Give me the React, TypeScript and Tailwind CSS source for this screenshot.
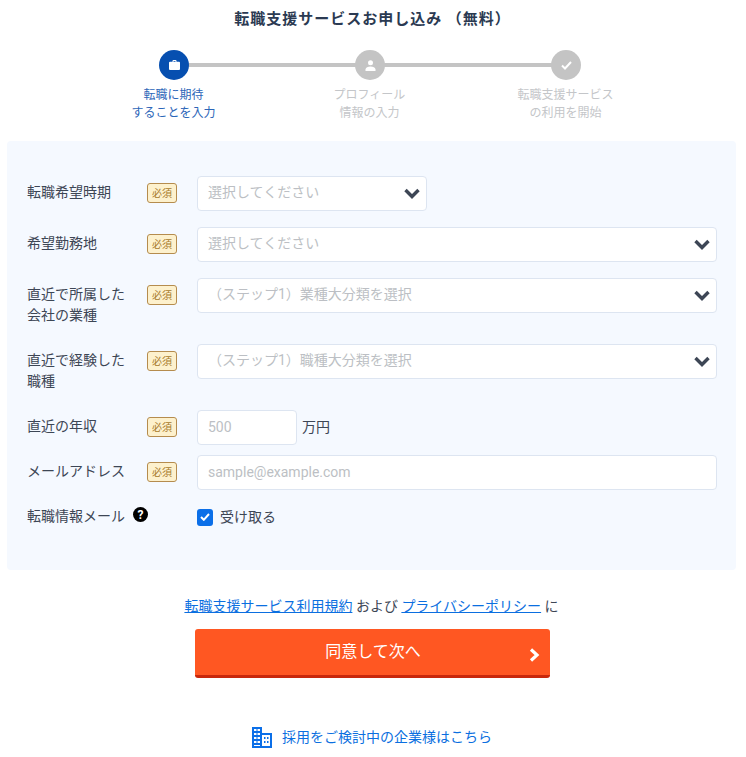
// App.tsx
import type { ReactNode } from "react";

const steps = [
  { label: ["転職に期待", "することを入力"], active: true, icon: "bag" },
  { label: ["プロフィール", "情報の入力"], active: false, icon: "user" },
  { label: ["転職支援サービス", "の利用を開始"], active: false, icon: "check" },
];

const StepIcon = ({ name }: { name: string }) => {
  if (name === "bag") {
    return (
      <svg width="11" height="10" viewBox="0 0 11 10" fill="#fff">
        <path d="M3.500 1.800V1a1 1 0 0 1 1-1h2a1 1 0 0 1 1 1v.8H10a1 1 0 0 1 1 1V9a1 1 0 0 1-1 1H1a1 1 0 0 1-1-1V2.800a1 1 0 0 1 1-1h2.500zM4.500 1v.8h2V1h-2z" />
      </svg>
    );
  }
  if (name === "user") {
    return (
      <svg width="11" height="11" viewBox="0 0 11 11" fill="#fff">
        <circle cx="5.500" cy="2.800" r="2.500" />
        <path d="M0.500 11V9.500C0.500 7.500 3 6.500 5.500 6.500S10.500 7.500 10.500 9.500V11z" />
      </svg>
    );
  }
  return (
    <svg width="11" height="9" viewBox="0 0 11 9" fill="none" stroke="#fff" strokeWidth="2">
      <path d="M1 4.500l3 3 6-6.500" />
    </svg>
  );
};

const Chevron = () => (
  <svg width="16" height="11" viewBox="0 0 16 11" fill="none" stroke="#3d4655" strokeWidth="3.400" className="shrink-0">
    <path d="M1.500 2l6.500 6.500L14.500 2" />
  </svg>
);

const Required = () => (
  <span className="flex h-[20px] w-[30px] shrink-0 items-center justify-center rounded-[3px] border border-[#b58c4e] bg-[#fdf1cd] text-[10px] text-[#a77a2a]">
    必須
  </span>
);

const Field = ({ label, children }: { label: ReactNode; children: ReactNode }) => (
  <div className="flex items-start">
    <div className="flex w-[170px] shrink-0 items-start">
      <div className="w-[120px] pt-[6px] text-[14px] leading-[21px] text-[#3d4655]">{label}</div>
      <div className="pt-[7px]">
        <Required />
      </div>
    </div>
    <div className="min-w-0 flex-1">{children}</div>
  </div>
);

const Select = ({ text, className = "w-full" }: { text: string; className?: string }) => (
  <div className={`flex h-[35px] items-center justify-between rounded border border-[#dde5f1] bg-white pl-[10px] pr-[6px] text-[14px] text-[#bcbfc4] ${className}`}>
    <span className="-mt-[2px]">{text}</span>
    <Chevron />
  </div>
);

export default function App() {
  return (
    <div className="min-h-[757px] bg-white font-['Roboto','Noto_Sans_CJK_JP',sans-serif] text-[#3d4655]">
      <h1 className="pr-[1px] pt-[8px] text-center text-[15px] font-bold leading-[22px] tracking-[1px] text-[#2b3a52]">
        転職支援サービスお申し込み （無料）
      </h1>

      <div className="relative ml-[76px] mt-[20px] flex w-[588px] justify-between">
        <div className="absolute left-[98px] right-[98px] top-[13px] h-[4px] bg-[#c4c4c4]" />
        {steps.map((step) => (
          <div key={step.icon} className="relative flex w-[196px] flex-col items-center">
            <div className={`flex h-[30px] w-[30px] items-center justify-center rounded-full ${step.active ? "bg-[#064fb0]" : "bg-[#c4c4c4]"}`}>
              <StepIcon name={step.icon} />
            </div>
            <div className={`mt-[6px] pr-[1px] text-center text-[12px] leading-[18px] ${step.active ? "text-[#2c66b8]" : "text-[#c4c6c9]"}`}>
              {step.label.map((line) => (
                <div key={line}>{line}</div>
              ))}
            </div>
          </div>
        ))}
      </div>

      <form className="mx-[7px] mt-[19px] flex h-[429px] w-[729px] flex-col rounded bg-[#f5f9ff] pl-[20px] pr-[19px] pt-[35px]">
        <Field label="転職希望時期">
          <Select text="選択してください" className="w-[230px]" />
        </Field>
        <div className="mt-[16px]">
          <Field label="希望勤務地">
            <Select text="選択してください" />
          </Field>
        </div>
        <div className="mt-[16px]">
          <Field label={<>直近で所属した<br />会社の業種</>}>
            <Select text="（ステップ1）業種大分類を選択" />
          </Field>
        </div>
        <div className="mt-[18px]">
          <Field label={<>直近で経験した<br />職種</>}>
            <Select text="（ステップ1）職種大分類を選択" />
          </Field>
        </div>
        <div className="mt-[18px]">
          <Field label="直近の年収">
            <div className="flex items-center gap-[5px] text-[14px]">
              <input
                placeholder="500"
                className="h-[35px] w-[100px] rounded border border-[#dde5f1] bg-white pb-[1px] pl-[10px] text-[14px] outline-none placeholder:text-[#bcbfc4]"
              />
              <span>万円</span>
            </div>
          </Field>
        </div>
        <div className="mt-[10px]">
          <Field label="メールアドレス">
            <input
              placeholder="sample@example.com"
              className="h-[35px] w-full rounded border border-[#dde5f1] bg-white pb-[1px] pl-[10px] text-[14px] outline-none placeholder:text-[#bcbfc4]"
            />
          </Field>
        </div>
        <div className="mt-[12px]">
          <div className="flex items-start">
            <div className="flex w-[170px] shrink-0 items-start pt-[4px]">
              <span className="text-[14px] leading-[21px]">転職情報メール</span>
              <span className="ml-[8px] mt-[1px] flex h-[15px] w-[15px] items-center justify-center rounded-full bg-black text-[12px] font-bold leading-none text-white">?</span>
            </div>
            <label className="flex items-center gap-[7px] pt-[5px] text-[14px] leading-[20px]">
              <span className="flex h-[17px] w-[16px] items-center justify-center rounded-[3px] bg-[#0b6fe8]">
                <svg width="10" height="8" viewBox="0 0 10 8" fill="none" stroke="#fff" strokeWidth="2">
                  <path d="M1 4l2.800 2.800L9 1" />
                </svg>
              </span>
              受け取る
            </label>
          </div>
        </div>
      </form>

      <p className="mt-[26px] pr-[3px] text-center text-[14px] leading-[20px]">
        <a className="text-[#0b6fe0] underline">転職支援サービス利用規約</a> および{" "}
        <a className="text-[#0b6fe0] underline">プライバシーポリシー</a> に
      </p>

      <button className="relative ml-[195px] mt-[13px] flex h-[49px] w-[355px] items-center justify-center rounded-[3px] border-b-[3px] border-[#c8280c] bg-[#ff5722] pb-[1px] pl-[1px] text-[16px] text-white">
        同意して次へ
        <svg width="11" height="14" viewBox="0 0 11 14" fill="none" stroke="#fff" strokeWidth="3.200" className="absolute right-[10px] top-[19px]">
          <path d="M2 1.500l6 5.500-6 5.500" />
        </svg>
      </button>

      <a className="mt-[49px] flex items-center justify-center gap-[10px] pr-[2px] text-[14px] text-[#0b6fe0]">
        <svg width="20" height="21" viewBox="0 0 20 21" fill="#0b6fe8">
          <path fillRule="evenodd" d="M0 0h10v6h10v15H0zM2 2v2h2.500V2zM5.500 2v2H8V2zM2 6v2h2.500V6zM5.500 6v2H8V6zM2 10v2h2.500v-2zM5.500 10v2H8v-2zM2 14v2h2.500v-2zM5.500 14v2H8v-2zM2 18v1h6v-1zM10 8v11h8V8zM12 10h1.500v2H12zM15 10h1.500v2H15zM12 14h1.500v2H12zM15 14h1.500v2H15z" />
        </svg>
        採用をご検討中の企業様はこちら
      </a>
    </div>
  );
}
